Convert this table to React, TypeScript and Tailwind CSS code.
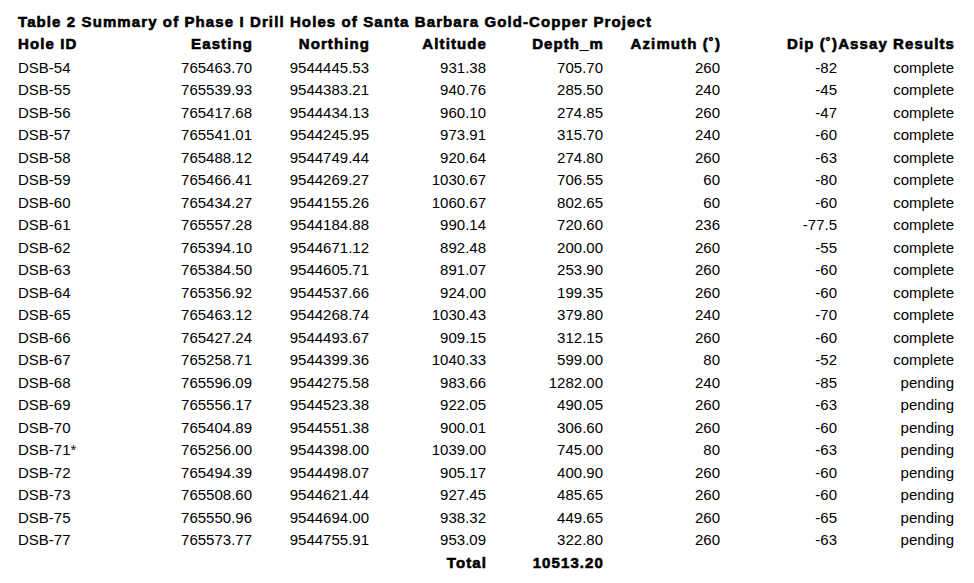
const headers = [
  "Hole ID",
  "Easting",
  "Northing",
  "Altitude",
  "Depth_m",
  "Azimuth (˚)",
  "Dip (˚)",
  "Assay Results",
];

const rows: string[][] = [
  ["DSB-54", "765463.70", "9544445.53", "931.38", "705.70", "260", "-82", "complete"],
  ["DSB-55", "765539.93", "9544383.21", "940.76", "285.50", "240", "-45", "complete"],
  ["DSB-56", "765417.68", "9544434.13", "960.10", "274.85", "260", "-47", "complete"],
  ["DSB-57", "765541.01", "9544245.95", "973.91", "315.70", "240", "-60", "complete"],
  ["DSB-58", "765488.12", "9544749.44", "920.64", "274.80", "260", "-63", "complete"],
  ["DSB-59", "765466.41", "9544269.27", "1030.67", "706.55", "60", "-80", "complete"],
  ["DSB-60", "765434.27", "9544155.26", "1060.67", "802.65", "60", "-60", "complete"],
  ["DSB-61", "765557.28", "9544184.88", "990.14", "720.60", "236", "-77.5", "complete"],
  ["DSB-62", "765394.10", "9544671.12", "892.48", "200.00", "260", "-55", "complete"],
  ["DSB-63", "765384.50", "9544605.71", "891.07", "253.90", "260", "-60", "complete"],
  ["DSB-64", "765356.92", "9544537.66", "924.00", "199.35", "260", "-60", "complete"],
  ["DSB-65", "765463.12", "9544268.74", "1030.43", "379.80", "240", "-70", "complete"],
  ["DSB-66", "765427.24", "9544493.67", "909.15", "312.15", "260", "-60", "complete"],
  ["DSB-67", "765258.71", "9544399.36", "1040.33", "599.00", "80", "-52", "complete"],
  ["DSB-68", "765596.09", "9544275.58", "983.66", "1282.00", "240", "-85", "pending"],
  ["DSB-69", "765556.17", "9544523.38", "922.05", "490.05", "260", "-63", "pending"],
  ["DSB-70", "765404.89", "9544551.38", "900.01", "306.60", "260", "-60", "pending"],
  ["DSB-71*", "765256.00", "9544398.00", "1039.00", "745.00", "80", "-63", "pending"],
  ["DSB-72", "765494.39", "9544498.07", "905.17", "400.90", "260", "-60", "pending"],
  ["DSB-73", "765508.60", "9544621.44", "927.45", "485.65", "260", "-60", "pending"],
  ["DSB-75", "765550.96", "9544694.00", "938.32", "449.65", "260", "-65", "pending"],
  ["DSB-77", "765573.77", "9544755.91", "953.09", "322.80", "260", "-63", "pending"],
];

// heavy, slightly spread bold like the spreadsheet export
const bold = "font-bold tracking-[1.1px] [-webkit-text-stroke:0.6px_black]";

const Cell = ({ text, index }: { text: string; index: number }) => (
  <div
    className={`whitespace-nowrap ${index === 0 ? "text-left" : "text-right"}`}
  >
    {text}
  </div>
);

export default function App() {
  return (
    <div className="min-h-[583px] w-[974px] bg-white pl-[18px] pt-[10.5px] font-['Liberation_Sans',Arial,sans-serif] text-[15px] text-black">
      <h1 className={`h-[22.5px] whitespace-nowrap leading-[22.5px] ${bold}`}>
        Table 2 Summary of Phase I Drill Holes of Santa Barbara Gold-Copper
        Project
      </h1>
      <div className="grid grid-cols-[repeat(8,117px)]">
        {headers.map((h, i) => (
          <div
            key={h}
            className={`h-[23.5px] whitespace-nowrap leading-[22.5px] ${bold} ${
              i === 0 ? "text-left" : "-mr-[1px] text-right"
            }`}
          >
            {h}
          </div>
        ))}
      </div>
      {rows.map((row) => (
        <div
          key={row[0]}
          className="grid h-[22.5px] grid-cols-[repeat(8,117px)] leading-[22.5px]"
        >
          {row.map((v, i) => (
            <Cell key={i} text={v} index={i} />
          ))}
        </div>
      ))}
      <div
        className={`grid h-[22.5px] grid-cols-[repeat(8,117px)] leading-[22.5px] ${bold}`}
      >
        <div className="col-start-4 -mr-[1px] text-right">Total</div>
        <div className="-mr-[1px] text-right">10513.20</div>
      </div>
    </div>
  );
}
